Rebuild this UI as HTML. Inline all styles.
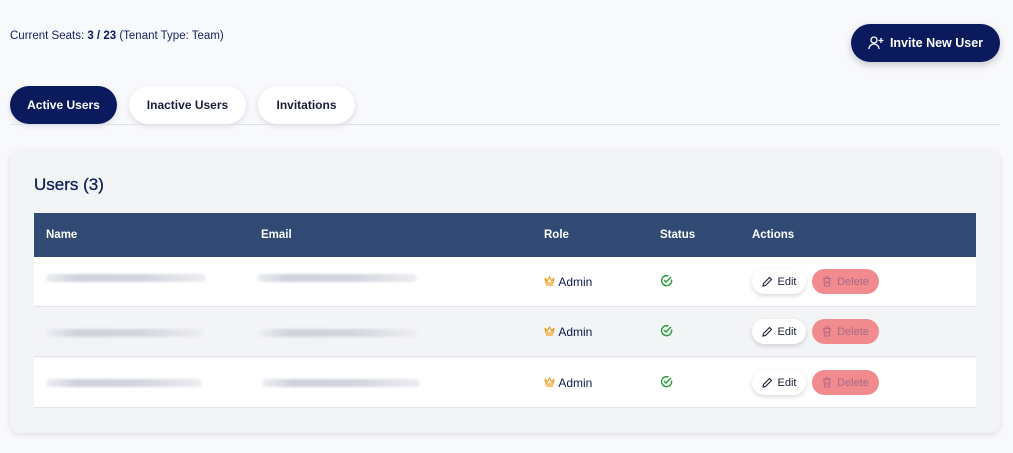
<!DOCTYPE html>
<html><head><meta charset="utf-8"><style>
*{box-sizing:border-box;margin:0;padding:0}
body{width:1013px;height:453px;background:#f8f9fc;font-family:"Liberation Sans",Arial,sans-serif;position:relative;overflow:hidden;color:#0f1a4f}
.seats{position:absolute;left:10px;top:30px;font-size:11.5px;color:#15205a}
.seats b{font-weight:bold;color:#0a1a5c}
.invite{position:absolute;left:851px;top:24px;width:149px;height:38px;border-radius:19px;background:#0a1a5c;color:#fff;font-size:12.5px;font-weight:bold;display:flex;align-items:center;justify-content:center;gap:6px;box-shadow:0 3px 8px rgba(0,0,0,.2)}
.tab{position:absolute;top:86px;height:38px;border-radius:19px;background:#fff;font-size:12px;font-weight:bold;display:flex;align-items:center;justify-content:center;box-shadow:0 2px 6px rgba(0,0,0,.12);color:#1a1f36}
.tab.on{background:#0a1a5c;color:#fff}
.line{position:absolute;left:10px;top:124px;width:990px;height:1px;background:#dde0e6}
.card{position:absolute;left:10px;top:150px;width:990px;height:283px;background:#f3f4f6;border-radius:10px;box-shadow:0 2px 6px rgba(0,0,0,.1)}
.title{position:absolute;left:34px;top:175px;font-size:17px;color:#0f1f5c;-webkit-text-stroke:0.3px #0f1f5c}
.thead{position:absolute;left:34px;top:213px;width:942px;height:44px;background:#304a74;color:#fff;font-size:11.5px;font-weight:bold}
.thead span,.row span{position:absolute;top:50%;transform:translateY(-50%)}
.row{position:absolute;left:34px;width:942px;height:50px;font-size:12px;border-bottom:1px solid #e3e5ea}
.blur{position:absolute;height:8px;border-radius:4px;background:linear-gradient(90deg,#eceef2,#cfd2dc 20%,#d4d6df 60%,#eceef2);filter:blur(1px)}
.edit{position:absolute;left:718px;top:12px;width:54px;height:25px;border-radius:13px;background:#fff;box-shadow:0 2px 5px rgba(0,0,0,.15);font-size:11px;display:flex;align-items:center;justify-content:center;gap:5px;color:#1a1f36}
.del{position:absolute;left:778px;top:12px;width:67px;height:25px;border-radius:13px;background:#f28b8e;font-size:11px;display:flex;align-items:center;justify-content:center;gap:5px;color:#a66a86}
</style></head><body>
<div class="seats">Current Seats: <b>3 / 23</b> (Tenant Type: Team)</div>
<div class="invite"><svg width="16" height="16" viewBox="0 0 16 16" fill="none" stroke="#fff" stroke-width="1.3"><circle cx="6" cy="5" r="3"/><path d="M1 14c0-3 2.5-5 5-5s5 2 5 5M13 3v5M10.5 5.5h5"/></svg>Invite New User</div>
<div class="tab on" style="left:10px;width:107px">Active Users</div>
<div class="tab" style="left:129px;width:117px">Inactive Users</div>
<div class="tab" style="left:258px;width:97px">Invitations</div>
<div class="line"></div>
<div class="card"></div>
<div class="title">Users (3)</div>
<div class="thead"><span style="left:12px">Name</span><span style="left:227px">Email</span><span style="left:510px">Role</span><span style="left:626px">Status</span><span style="left:718px">Actions</span></div>
<div class="row" style="top:257px;background:#fff">
<div class="blur" style="left:12px;top:17px;width:160px"></div><div class="blur" style="left:223px;top:17px;width:160px"></div>
<span style="left:510px"><svg width="11" height="10" viewBox="0 0 11 10" fill="none" stroke="#f0a020" stroke-width="1.2"><path d="M1 2l2.2 3L5.5 1l2.3 4L10 2l-1 5H2zM2 9h7"/></svg>&nbsp;Admin</span>
<span style="left:626px"><svg width="13" height="13" viewBox="0 0 13 13" fill="none" stroke="#2a9a3a" stroke-width="1.4"><path d="M11.5 5.5A5 5 0 1 1 8.5 2"/><path d="M4 6l2 2 5-5"/></svg></span>
<div class="edit"><svg width="11" height="11" viewBox="0 0 11 11" fill="none" stroke="#1a1f36" stroke-width="1.1"><path d="M7.5 1.5l2 2L3.5 9.5 1 10l.5-2.5z"/></svg>Edit</div>
<div class="del"><svg width="10" height="11" viewBox="0 0 10 11" fill="none" stroke="#b86a86" stroke-width="1.1"><path d="M1 2.5h8M3.5 2.5V1h3v1.5M2 2.5l.5 7.5h5l.5-7.5M4 5v3M6 5v3"/></svg>Delete</div></div>
<div class="row" style="top:307px;background:#f3f4f6">
<div class="blur" style="left:12px;top:22px;width:158px"></div><div class="blur" style="left:225px;top:22px;width:158px"></div>
<span style="left:510px"><svg width="11" height="10" viewBox="0 0 11 10" fill="none" stroke="#f0a020" stroke-width="1.2"><path d="M1 2l2.2 3L5.5 1l2.3 4L10 2l-1 5H2zM2 9h7"/></svg>&nbsp;Admin</span>
<span style="left:626px"><svg width="13" height="13" viewBox="0 0 13 13" fill="none" stroke="#2a9a3a" stroke-width="1.4"><path d="M11.5 5.5A5 5 0 1 1 8.5 2"/><path d="M4 6l2 2 5-5"/></svg></span>
<div class="edit"><svg width="11" height="11" viewBox="0 0 11 11" fill="none" stroke="#1a1f36" stroke-width="1.1"><path d="M7.5 1.5l2 2L3.5 9.5 1 10l.5-2.5z"/></svg>Edit</div>
<div class="del"><svg width="10" height="11" viewBox="0 0 10 11" fill="none" stroke="#b86a86" stroke-width="1.1"><path d="M1 2.5h8M3.5 2.5V1h3v1.5M2 2.5l.5 7.5h5l.5-7.5M4 5v3M6 5v3"/></svg>Delete</div></div>
<div class="row" style="top:358px;background:#fff">
<div class="blur" style="left:12px;top:21px;width:156px"></div><div class="blur" style="left:228px;top:21px;width:158px"></div>
<span style="left:510px"><svg width="11" height="10" viewBox="0 0 11 10" fill="none" stroke="#f0a020" stroke-width="1.2"><path d="M1 2l2.2 3L5.5 1l2.3 4L10 2l-1 5H2zM2 9h7"/></svg>&nbsp;Admin</span>
<span style="left:626px"><svg width="13" height="13" viewBox="0 0 13 13" fill="none" stroke="#2a9a3a" stroke-width="1.4"><path d="M11.5 5.5A5 5 0 1 1 8.5 2"/><path d="M4 6l2 2 5-5"/></svg></span>
<div class="edit"><svg width="11" height="11" viewBox="0 0 11 11" fill="none" stroke="#1a1f36" stroke-width="1.1"><path d="M7.5 1.5l2 2L3.5 9.5 1 10l.5-2.5z"/></svg>Edit</div>
<div class="del"><svg width="10" height="11" viewBox="0 0 10 11" fill="none" stroke="#b86a86" stroke-width="1.1"><path d="M1 2.5h8M3.5 2.5V1h3v1.5M2 2.5l.5 7.5h5l.5-7.5M4 5v3M6 5v3"/></svg>Delete</div></div>
</body></html>
